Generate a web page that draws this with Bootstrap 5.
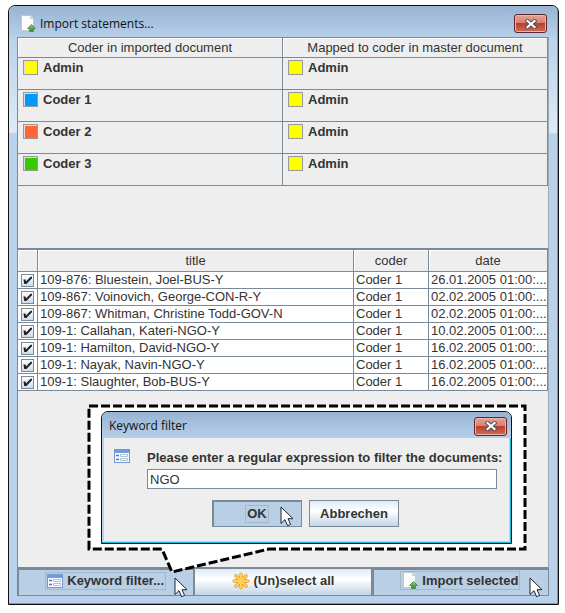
<!DOCTYPE html>
<html lang="en">
<head>
<meta charset="utf-8">
<meta name="viewport" content="width=device-width, initial-scale=1">
<title>Import statements...</title>
<link href="https://cdn.jsdelivr.net/npm/bootstrap@5.3.0/dist/css/bootstrap.min.css" rel="stylesheet">
<style>
body{font:13px/16px "Liberation Sans",Arial,sans-serif;color:#333;background:#fff}
.stage{min-height:100vh;padding:5px 6px 8px 8px}
.win{border:1px solid #111;border-radius:7px 7px 0 0;background:#b9d1ea;box-shadow:inset -1px -1px #1cbcdc}
.main-win{padding:0 9px 8px 8px;background:linear-gradient(#b9d1ea 30px,#dfeaf5 126px,#b9d1ea 128px)}
.titlebar{background:linear-gradient(#98b4d2,#b7cfe9);font-family:"Open Sans","Noto Sans",sans-serif;font-size:12px;color:#111;border-radius:6px 6px 0 0}
.main-win>.titlebar{height:31px;margin:0 -8px 0 -8px;padding:4px 10px 0 11px}
.close-btn{width:33px;height:19px;padding:0;border:1px solid #5a2430;border-radius:3px;background:linear-gradient(#e5a497 0,#d98072 45%,#bd3f2b 50%,#cf6d58 100%);box-shadow:inset 0 0 0 1px #edb5aa;line-height:0}
.pane{background:#eee;border:1px solid #7a8a99;border-right-color:#9aaabb}
.pane table{table-layout:fixed;border-collapse:separate;border-spacing:0;width:100%;margin:0}
.pane th,.pane td{border-right:1px solid #7a8a99;border-bottom:1px solid #7a8a99;padding:0 2px;overflow:hidden;white-space:nowrap;vertical-align:top}
.pane th{font-weight:400;text-align:center;background:#eee;box-shadow:inset 1px 1px #fff;vertical-align:middle}
.coder-pane{height:212px}
.coder-pane th{height:20px}
.coder-pane td{height:32px;font-weight:700;padding:2px 5px}
.coder{display:flex;gap:5px}
.swatch{width:15px;height:15px;border:1px solid #999;box-shadow:inset 1px 1px #ddd}
.sw-yellow{background:#ff0}.sw-blue{background:#09f}.sw-orange{background:#f63}.sw-green{background:#3c0}
.doc-pane th{height:22px}
.doc-pane td{height:17px;padding-right:0;background:#fff}
.col-tick{width:20px}.col-coder{width:75px}.col-date{width:119px}
.tick{appearance:none;display:block;width:13px;height:13px;margin:2px 1px 0;border:1px solid #7a8a99;background:linear-gradient(#fff,#cadcec)}
.tick:checked::before{content:"";display:block;width:9px;height:9px;margin:1px;background:#222;clip-path:polygon(5% 38%,28% 38%,34% 60%,84% 8%,100% 8%,100% 24%,38% 88%,14% 88%)}
.metal{border:1px solid #7a8a99;border-radius:0;padding:0 4px;font:700 13px/16px "Liberation Sans",Arial,sans-serif;color:#333;background:linear-gradient(#dfeaf4 0,#fff 40%,#c2d5e7 100%)}
.metal.pressed{background:#b8cfe5;box-shadow:inset 1px 1px #7a8a99}
.face{border:1px solid transparent;padding:0 1px;display:inline-flex;align-items:center;gap:4px;white-space:nowrap}
.pressed .face{border-color:#a3b8cc}
.btn-row .metal{height:28px}
.has-pointer{position:relative}
.pointer{position:absolute;pointer-events:none;z-index:3}
.btn-row .pointer{right:5px;top:8px}
.ok-pointer{right:7px;top:5px}
.callout{position:absolute;left:67px;bottom:-8px;width:443px;height:172px}
.callout-line{position:absolute;left:0;top:0;z-index:2}
.dialog{position:relative;z-index:2;margin:8px 16px 0 16px;padding:0 2px 2px 2px}
.dialog .titlebar{height:26px;margin:0 -2px;padding:2px 4px 0 7px}
.dialog-body{background:#eee;padding:11px 12px 14px 10px}
.prompt{gap:17px}
.filter-label{font-weight:700;line-height:18px;white-space:nowrap}
.prompt-field{flex:1 1 0;min-width:0}
.filter-text{display:block;width:100%;height:20px;margin-top:2px;border:1px solid #7a8a99;padding:0 2px;color:#333;background:#fff}
.dialog-actions{gap:7px;margin-top:11px}
.dialog-actions .metal{width:90px;height:27px}
</style>
<script src="https://cdn.jsdelivr.net/npm/bootstrap@5.3.0/dist/js/bootstrap.bundle.min.js"></script>
</head>
<body>
<svg width="0" height="0" class="position-absolute" aria-hidden="true">
<defs>
<linearGradient id="leaf" x2="0" y2="1"><stop stop-color="#8fce7a"/><stop offset="1" stop-color="#2f8a2f"/></linearGradient>
<symbol id="page-up" viewBox="0 0 16 17"><path d="M1.500.5h9l3 3v12h-12z" fill="#fdfdfd" stroke="#c3c8ca"/><path d="M10.500.5v3h3" fill="#e8ecec" stroke="#c3c8ca"/><path d="M11.500 9.500l4 4h-2v3h-4v-3h-2z" fill="url(#leaf)" stroke="#3c8c3c" stroke-width=".8"/></symbol>
<symbol id="form" viewBox="0 0 16 14"><rect x=".5" y=".5" width="15" height="13" fill="#f8fbff" stroke="#7298cf"/><path d="M1 1h14v3H1z" fill="#6f9ce0"/><path d="M2 6.500h3M2 10.500h3" stroke="#5378b4" stroke-width="1.500"/><path d="M6.500 5.500h7v2h-7zM6.500 9.500h7v2h-7z" fill="#fff" stroke="#b5bfcd"/></symbol>
<symbol id="star" viewBox="0 0 18 18"><g stroke="#dd9f38" stroke-width="3.600" stroke-linecap="round"><path d="M9 2.200v13.600M2.200 9h13.600M4 4l10 10M14 4L4 14"/></g><g stroke="#ffcf58" stroke-width="2.200" stroke-linecap="round"><path d="M9 2.200v13.600M2.200 9h13.600M4 4l10 10M14 4L4 14"/></g></symbol>
<symbol id="cross" viewBox="0 0 12 10"><path d="M2.500 2l7 6M9.500 2l-7 6" stroke="#4c4c58" stroke-width="4" stroke-linecap="square"/><path d="M2.500 2l7 6M9.500 2l-7 6" stroke="#fff" stroke-width="2.200" stroke-linecap="square"/></symbol>
<symbol id="arrow" viewBox="0 0 14 21"><path d="M1 1v16.500l4-3.800 2.600 6 3-1.300-2.600-5.700h5z" fill="#fff" stroke="#223" stroke-linejoin="round"/></symbol>
</defs>
</svg>
<div class="stage d-flex flex-column">
<main class="win main-win d-flex flex-column flex-grow-1">
  <header class="titlebar d-flex align-items-center">
    <svg width="16" height="17" class="me-1 flex-shrink-0" aria-hidden="true"><use href="#page-up"/></svg>
    <span class="flex-grow-1">Import statements...</span>
    <button type="button" class="close-btn" aria-label="Close"><svg width="12" height="10"><use href="#cross"/></svg></button>
  </header>
  <section class="pane coder-pane">
    <table>
      <thead><tr><th scope="col">Coder in imported document</th><th scope="col">Mapped to coder in master document</th></tr></thead>
      <tbody>
        <tr><td><div class="coder"><span class="swatch sw-yellow"></span>Admin</div></td><td><div class="coder"><span class="swatch sw-yellow"></span>Admin</div></td></tr>
        <tr><td><div class="coder"><span class="swatch sw-blue"></span>Coder 1</div></td><td><div class="coder"><span class="swatch sw-yellow"></span>Admin</div></td></tr>
        <tr><td><div class="coder"><span class="swatch sw-orange"></span>Coder 2</div></td><td><div class="coder"><span class="swatch sw-yellow"></span>Admin</div></td></tr>
        <tr><td><div class="coder"><span class="swatch sw-green"></span>Coder 3</div></td><td><div class="coder"><span class="swatch sw-yellow"></span>Admin</div></td></tr>
      </tbody>
    </table>
  </section>
  <section class="pane doc-pane flex-grow-1 position-relative">
    <table>
      <colgroup><col class="col-tick"><col><col class="col-coder"><col class="col-date"></colgroup>
      <thead><tr><th></th><th scope="col">title</th><th scope="col">coder</th><th scope="col">date</th></tr></thead>
      <tbody>
        <tr><td><input class="tick" type="checkbox" checked aria-labelledby="d1"></td><td id="d1">109-876: Bluestein, Joel-BUS-Y</td><td>Coder 1</td><td>26.01.2005 01:00:...</td></tr>
        <tr><td><input class="tick" type="checkbox" checked aria-labelledby="d2"></td><td id="d2">109-867: Voinovich, George-CON-R-Y</td><td>Coder 1</td><td>02.02.2005 01:00:...</td></tr>
        <tr><td><input class="tick" type="checkbox" checked aria-labelledby="d3"></td><td id="d3">109-867: Whitman, Christine Todd-GOV-N</td><td>Coder 1</td><td>02.02.2005 01:00:...</td></tr>
        <tr><td><input class="tick" type="checkbox" checked aria-labelledby="d4"></td><td id="d4">109-1: Callahan, Kateri-NGO-Y</td><td>Coder 1</td><td>10.02.2005 01:00:...</td></tr>
        <tr><td><input class="tick" type="checkbox" checked aria-labelledby="d5"></td><td id="d5">109-1: Hamilton, David-NGO-Y</td><td>Coder 1</td><td>16.02.2005 01:00:...</td></tr>
        <tr><td><input class="tick" type="checkbox" checked aria-labelledby="d6"></td><td id="d6">109-1: Nayak, Navin-NGO-Y</td><td>Coder 1</td><td>16.02.2005 01:00:...</td></tr>
        <tr><td><input class="tick" type="checkbox" checked aria-labelledby="d7"></td><td id="d7">109-1: Slaughter, Bob-BUS-Y</td><td>Coder 1</td><td>16.02.2005 01:00:...</td></tr>
      </tbody>
    </table>
    <div class="callout d-flow-root">
      <svg class="callout-line" width="443" height="172" aria-hidden="true"><path d="M4 3H440V146H184L87 169L77 146H4z" fill="#fff" stroke="#000" stroke-width="3" stroke-dasharray="9 3"/></svg>
      <div class="d-flex flex-column">
      <form class="win dialog" role="dialog" aria-labelledby="dlg-title">
        <div class="titlebar d-flex align-items-center">
          <span id="dlg-title" class="flex-grow-1">Keyword filter</span>
          <button type="button" class="close-btn" aria-label="Close"><svg width="12" height="10"><use href="#cross"/></svg></button>
        </div>
        <div class="dialog-body">
          <div class="prompt d-flex align-items-start">
            <svg width="16" height="14" class="flex-shrink-0" aria-hidden="true"><use href="#form"/></svg>
            <div class="prompt-field">
              <label class="filter-label d-block" for="regex">Please enter a regular expression to filter the documents:</label>
              <input class="filter-text" type="text" id="regex" value="NGO">
            </div>
          </div>
          <div class="dialog-actions d-flex justify-content-center">
            <button type="button" class="metal pressed has-pointer"><span class="face">OK</span><svg class="pointer ok-pointer" width="14" height="21" aria-hidden="true"><use href="#arrow"/></svg></button>
            <button type="button" class="metal"><span class="face">Abbrechen</span></button>
          </div>
        </div>
      </form>
      </div>
    </div>
  </section>
  <footer class="btn-row row g-0">
    <button type="button" class="metal pressed has-pointer col"><span class="face"><svg width="16" height="14" aria-hidden="true"><use href="#form"/></svg>Keyword filter...</span><svg class="pointer" width="14" height="21" aria-hidden="true"><use href="#arrow"/></svg></button>
    <button type="button" class="metal col"><span class="face"><svg width="18" height="18" aria-hidden="true"><use href="#star"/></svg>(Un)select all</span></button>
    <button type="button" class="metal pressed has-pointer col"><span class="face"><svg width="16" height="17" aria-hidden="true"><use href="#page-up"/></svg>Import selected</span><svg class="pointer" width="14" height="21" aria-hidden="true"><use href="#arrow"/></svg></button>
  </footer>
</main>
</div>
</body>
</html>
